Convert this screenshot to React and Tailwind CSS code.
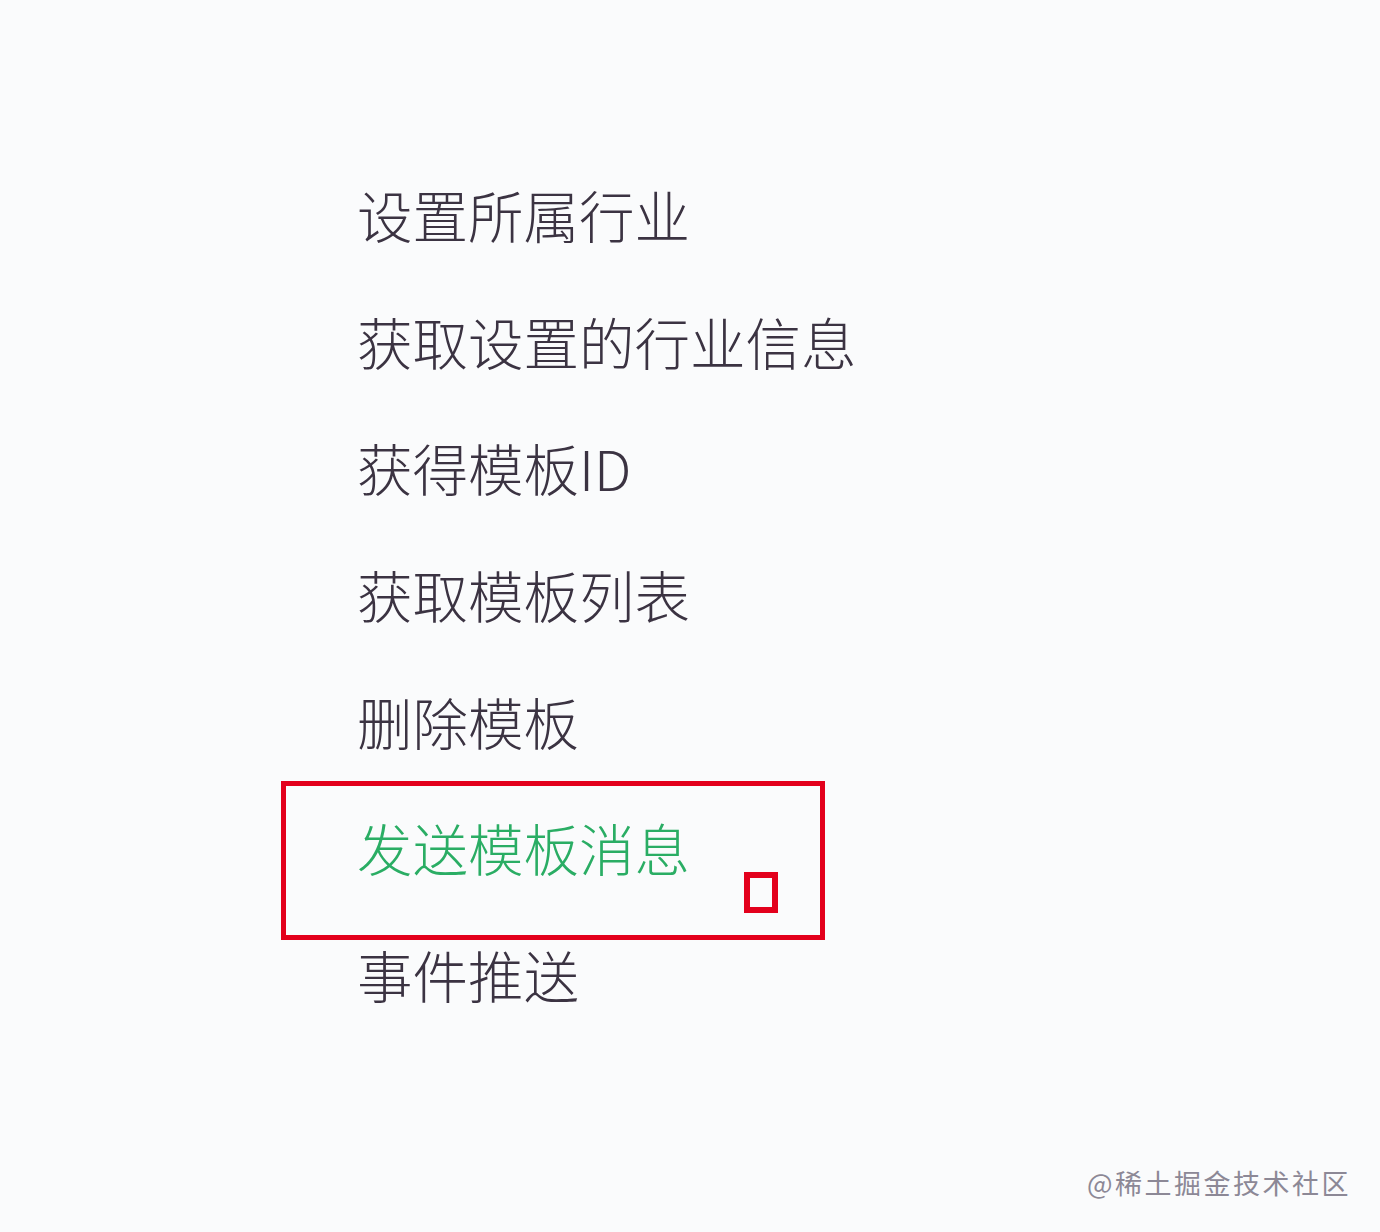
import React from "react";

const items = [
  "设置所属行业",
  "获取设置的行业信息",
  "获得模板ID",
  "获取模板列表",
  "删除模板",
  "发送模板消息",
  "事件推送",
];

export default function App() {
  return (
    <div
      className="relative w-[1380px] h-[1232px] bg-[#fafbfc] overflow-hidden"
      style={{ fontFamily: '"Noto Sans CJK SC", "Noto Sans", sans-serif' }}
    >
      <div className="flex flex-col pt-[151px] pl-[357px]">
        {items.map((t, i) => (
          <div
            key={t}
            className={
              "h-[126.7px] leading-[126.7px] text-[55.5px] font-light " +
              (i === 5 ? "text-[#2aad64]" : "text-[#3b3342]")
            }
          >
            {t}
          </div>
        ))}
      </div>
      <div className="absolute left-[281px] top-[781px] w-[544px] h-[159px] border-[5px] border-[#e3001c]" />
      <div className="absolute left-[744px] top-[872px] w-[34px] h-[41px] border-[6px] border-[#e3001c]" />
      <div className="absolute left-[1087px] top-[1163px] text-[27px] leading-[40px] tracking-[2.5px] text-[#8c8896]">
        @稀土掘金技术社区
      </div>
    </div>
  );
}
